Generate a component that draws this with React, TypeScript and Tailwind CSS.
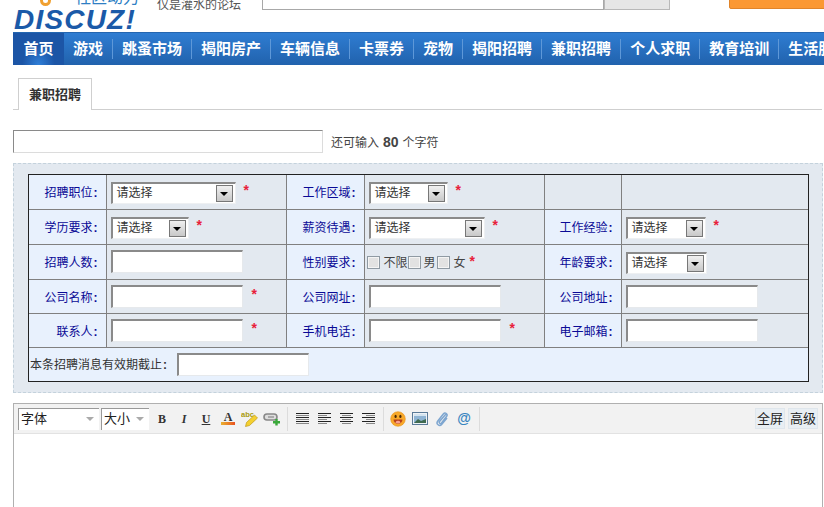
import React from 'react';

const navItems = ['游戏', '跳蚤市场', '揭阳房产', '车辆信息', '卡票券', '宠物', '揭阳招聘', '兼职招聘', '个人求职', '教育培训', '生活服务'];

const Star = ({ className = 'ml-2' }: { className?: string }) => (
  <span className={`${className} relative -top-[2px] text-[14px] font-bold leading-none text-[#e8203a]`}>*</span>
);

const Select = ({ width }: { width: string }) => (
  <div className={`${width} mt-[2px] flex h-[22px] items-center justify-between border-t-2 border-l-2 border-t-[#8a8a8a] border-l-[#8a8a8a] border-r border-b border-r-[#eef0f2] border-b-[#eef0f2] bg-white pr-[2px] pl-[4px] text-[12px] text-[#333]`}>
    <span>请选择</span>
    <span className="flex h-[17px] w-[17px] items-center justify-center border border-[#777] bg-gradient-to-b from-[#f0f0f0] to-[#c8c8c8]">
      <span className="mt-[1px] h-0 w-0 border-x-[4px] border-t-[4px] border-x-transparent border-t-black" />
    </span>
  </div>
);

const TextInput = () => (
  <div className="h-[23px] w-[132px] border-t-2 border-l-2 border-t-[#8a8a8a] border-l-[#8a8a8a] border-r border-b border-r-[#e6e9ec] border-b-[#e6e9ec] bg-white" />
);

const Check = () => (
  <span className="flex h-[13px] w-[13px] items-center justify-center border border-[#8f9aa3] bg-[#f4f4f4]">
    <span className="h-[9px] w-[9px] bg-[#e2e2e2]" />
  </span>
);

const Label = ({ children, plain }: { children?: React.ReactNode; plain?: boolean }) => (
  <td className={`${plain ? 'bg-[#e3e9f0]' : 'bg-[#e8f1fd]'} border-r border-b border-[#808080] pt-[3px] pr-[8px] text-right text-[12px] text-[#0a0a96]`}>
    {children}
    {children && <b className="ml-[1px]">:</b>}
  </td>
);

const Field = ({ children, last }: { children?: React.ReactNode; last?: boolean }) => (
  <td className={`${last ? '' : 'border-r'} border-b border-[#808080] bg-[#e3e9f0] pl-[4px]`}>
    <div className="flex items-center">{children}</div>
  </td>
);

const ToolSep = () => <span className="mr-[3px] ml-[4px] h-[24px] w-px bg-[#dcdcdc]" />;

const ToolBtn = ({ children }: { children: React.ReactNode }) => (
  <span className="flex h-[20px] w-[22px] items-center justify-center">{children}</span>
);

const AlignIcon = ({ rows }: { rows: [number, number][] }) => (
  <svg width="13" height="12" viewBox="0 0 13 12">
    {rows.map(([x, w], i) => (
      <rect key={i} x={x} y={i * 2} width={w} height="1" fill={i % 2 ? '#888' : '#222'} />
    ))}
  </svg>
);

export default function App() {
  return (
    <div className="h-[507px] w-[824px] overflow-hidden bg-white font-['Liberation_Sans','Noto_Sans_CJK_SC',sans-serif]">
      {/* header, top of it is cut off by the screenshot */}
      <div className="relative h-[32px] overflow-hidden pl-[14px]">
        <div className="flex h-[32px] items-start">
          <div className="relative h-[32px] w-[143px] shrink-0">
            <span className="absolute -top-[11px] left-[61px] text-[16px] leading-[18px] whitespace-nowrap text-[#2f7fc4]">社区动力</span>
            <span className="absolute -top-[5px] left-[26px] h-[11px] w-[11px] rounded-full border-[3px] border-[#f0a030]" />
            <span className="absolute top-[5px] left-0 text-[28px] leading-[30px] font-bold tracking-[1.2px] whitespace-nowrap text-[#1b5aa8] italic">DISCUZ!</span>
          </div>
          <span className="-mt-[2px] text-[12px] leading-[14px] whitespace-nowrap text-[#555]">仅是灌水的论坛</span>
          <div className="-mt-[14px] ml-[21px] h-[24px] w-[342px] shrink-0 border border-[#a8a8a8] bg-white" />
          <div className="-mt-[14px] h-[24px] w-[66px] shrink-0 border border-[#b8b8b8] bg-[#e6e6e6]" />
          <div className="-mt-[14px] ml-[59px] h-[23px] w-[100px] shrink-0 rounded-[2px] border border-[#e0842a] bg-[#fb9833]" />
        </div>
      </div>

      {/* nav */}
      <div className="ml-[13px] flex h-[33px] items-stretch overflow-hidden border-t border-[#2466b0] bg-gradient-to-b from-[#2f7dd2] to-[#2162ad] text-[15px] font-bold whitespace-nowrap text-white">
        <div className="flex w-[51px] shrink-0 items-center justify-center bg-[radial-gradient(ellipse_at_bottom,#2f7fd8_0%,#1c55a6_45%)]">首页</div>
        {navItems.map((item) => (
          <div key={item} className="flex shrink-0 items-center px-[9px]">
            <span>{item}</span>
            <span className="relative left-[9px] h-[20px] w-px bg-[#5e98d8]" />
          </div>
        ))}
      </div>

      <div className="w-[810px] pl-[13px]">
        {/* tab */}
        <div className="mt-[13px] flex h-[32px] w-[809px] border-b border-[#cfcfcf] pl-[5px]">
          <div className="h-[32px] w-[74px] border-x border-t border-[#cfcfcf] bg-white text-center text-[13px] leading-[32px] font-bold text-[#333]">兼职招聘</div>
        </div>

        {/* title */}
        <div className="mt-[20px] flex items-center text-[12px] text-[#444]">
          <div className="h-[23px] w-[310px] border-t border-l border-t-[#8a8a8a] border-l-[#8a8a8a] border-r border-b border-r-[#dcdcdc] border-b-[#dcdcdc] bg-white" />
          <span className="ml-[8px] pt-[2px]">还可输入</span>
          <span className="mx-[4px] pt-[2px] text-[14px] font-bold">80</span>
          <span className="pt-[2px]">个字符</span>
        </div>

        {/* form panel */}
        <div className="mt-[10px] h-[230px] w-[810px] border border-dashed border-[#c4d2dc] bg-[#e3e9f0] pt-[10px] pl-[14px]">
          <div className="w-[781px] border border-[#222]">
            <table className="w-[779px] table-fixed border-collapse">
              <colgroup>
                <col className="w-[77px]" />
                <col className="w-[180px]" />
                <col className="w-[78px]" />
                <col className="w-[180px]" />
                <col className="w-[77px]" />
                <col className="w-[187px]" />
              </colgroup>
              <tbody>
                <tr className="h-[34px]">
                  <Label>招聘职位</Label>
                  <Field><Select width="w-[125px]" /><Star /></Field>
                  <Label>工作区域</Label>
                  <Field><Select width="w-[79px]" /><Star /></Field>
                  <Label plain />
                  <Field last />
                </tr>
                <tr className="h-[35px]">
                  <Label>学历要求</Label>
                  <Field><Select width="w-[78px]" /><Star /></Field>
                  <Label>薪资待遇</Label>
                  <Field><Select width="w-[116px]" /><Star /></Field>
                  <Label>工作经验</Label>
                  <Field last><Select width="w-[80px]" /><Star /></Field>
                </tr>
                <tr className="h-[35px]">
                  <Label>招聘人数</Label>
                  <Field><TextInput /></Field>
                  <Label>性别要求</Label>
                  <td className="border-r border-b border-[#808080] bg-[#e3e9f0] pl-[2px]">
                    <div className="flex items-center pt-[2px] text-[12px] text-[#444]">
                      <Check /><span className="ml-[4px]">不限</span>
                      <Check /><span className="ml-[3px]">男</span>
                      <span className="ml-[1px]"><Check /></span><span className="ml-[4px]">女</span>
                      <Star className="ml-[4px]" />
                    </div>
                  </td>
                  <Label>年龄要求</Label>
                  <Field last><Select width="w-[81px]" /></Field>
                </tr>
                <tr className="h-[34px]">
                  <Label>公司名称</Label>
                  <Field><TextInput /><Star className="ml-[9px]" /></Field>
                  <Label>公司网址</Label>
                  <Field><TextInput /></Field>
                  <Label>公司地址</Label>
                  <Field last><TextInput /></Field>
                </tr>
                <tr className="h-[34px]">
                  <Label>联系人</Label>
                  <Field><TextInput /><Star className="ml-[9px]" /></Field>
                  <Label>手机电话</Label>
                  <Field><TextInput /><Star className="ml-[9px]" /></Field>
                  <Label>电子邮箱</Label>
                  <Field last><TextInput /></Field>
                </tr>
                <tr className="h-[34px]">
                  <td colSpan={6} className="bg-[#e8f1fd] pl-[1px]">
                    <div className="flex items-center text-[12px] text-[#333]">
                      <span className="pt-[2px]">本条招聘消息有效期截止<b className="ml-[1px]">:</b></span>
                      <span className="ml-[10px]"><TextInput /></span>
                    </div>
                  </td>
                </tr>
              </tbody>
            </table>
          </div>
        </div>

        {/* editor */}
        <div className="mt-[10px] h-[120px] w-[810px] border-t border-l border-r border-[#b0b0b0]">
          <div className="flex h-[30px] items-center border-b border-[#e2e2e2] bg-[#f2f2f2] pl-[4px]">
            <div className="flex h-[22px] w-[81px] items-center justify-between border-t border-l border-t-[#999] border-l-[#999] bg-white pr-[5px] pl-[2px] text-[13px] text-[#222]">
              <span>字体</span>
              <span className="h-0 w-0 border-x-[4px] border-t-[4px] border-x-transparent border-t-[#aaa]" />
            </div>
            <div className="ml-[2px] flex h-[22px] w-[48px] items-center justify-between border-t border-l border-t-[#999] border-l-[#999] bg-white pr-[5px] pl-[2px] text-[13px] text-[#222]">
              <span>大小</span>
              <span className="h-0 w-0 border-x-[4px] border-t-[4px] border-x-transparent border-t-[#aaa]" />
            </div>
            <div className="ml-[2px] flex items-center font-['Liberation_Serif',serif] text-[12px] font-bold text-[#333]">
              <ToolBtn>B</ToolBtn>
              <ToolBtn><i>I</i></ToolBtn>
              <ToolBtn><u>U</u></ToolBtn>
              <ToolBtn>
                <span className="flex flex-col items-center leading-[10px]">A<span className="h-[3px] w-[14px] bg-gradient-to-r from-[#e8b030] to-[#e85020]" /></span>
              </ToolBtn>
              <ToolBtn>
                <svg width="18" height="18" viewBox="0 0 18 18">
                  <text x="0" y="6.500" fontSize="7.500" fontWeight="bold" fill="#a89a10" fontFamily="Liberation Sans">abc</text>
                  <path d="M13.500 5l3 3-8 7.500-4 1 1-4z" fill="#f4d030" stroke="#c09a18" strokeWidth=".7" />
                </svg>
              </ToolBtn>
              <ToolBtn>
                <svg width="18" height="14" viewBox="0 0 18 14">
                  <rect x="1" y="2" width="13" height="6" rx="3" fill="#ddd" stroke="#888" strokeWidth="1.600" />
                  <path d="M5 5h6" stroke="#999" strokeWidth="1.500" />
                  <path d="M13.500 7v6.500M10 10.300h7" stroke="#3aa83a" strokeWidth="2.400" />
                </svg>
              </ToolBtn>
            </div>
            <ToolSep />
            <div className="flex items-center">
              <ToolBtn><AlignIcon rows={[[0, 13], [0, 13], [0, 13], [0, 13], [0, 13], [0, 13]]} /></ToolBtn>
              <ToolBtn><AlignIcon rows={[[0, 13], [0, 9], [0, 13], [0, 9], [0, 13], [0, 9]]} /></ToolBtn>
              <ToolBtn><AlignIcon rows={[[0, 13], [2, 9], [0, 13], [2, 9], [0, 13], [2, 9]]} /></ToolBtn>
              <ToolBtn><AlignIcon rows={[[0, 13], [4, 9], [0, 13], [4, 9], [0, 13], [4, 9]]} /></ToolBtn>
            </div>
            <ToolSep />
            <div className="flex items-center">
              <ToolBtn>
                <svg width="16" height="16" viewBox="0 0 16 16">
                  <circle cx="8" cy="8" r="7.300" fill="#f8a92a" stroke="#e89018" strokeWidth=".6" />
                  <ellipse cx="5.600" cy="5.400" rx="1.100" ry="1.700" fill="#4a2a08" />
                  <ellipse cx="10.400" cy="5.400" rx="1.100" ry="1.700" fill="#4a2a08" />
                  <path d="M3.500 8.500h9c0 2.500-2 4.300-4.500 4.300S3.500 11 3.500 8.500z" fill="#b8401a" />
                  <ellipse cx="8" cy="11.200" rx="2.200" ry="1.400" fill="#f8a090" />
                </svg>
              </ToolBtn>
              <ToolBtn>
                <svg width="16" height="13" viewBox="0 0 16 13">
                  <rect x=".5" y=".5" width="15" height="12" fill="#eef2f6" stroke="#5a7a98" />
                  <rect x="2" y="2" width="12" height="9" fill="#8fb4d4" />
                  <path d="M2 11l4-4 3 2 5-2v4z" fill="#3f6a50" />
                  <rect x="2" y="2" width="12" height="2" fill="#d4e4f0" />
                </svg>
              </ToolBtn>
              <ToolBtn>
                <svg width="14" height="16" viewBox="0 0 14 16">
                  <path d="M11 3L4.500 10.500c-1 1.300.8 2.800 2 1.500l5-6.500c1.800-2.300-1.300-4.800-3.200-2.500L2.800 10c-2.300 3 1.700 6 4 3.200L12 7" fill="none" stroke="#7ea6d0" strokeWidth="1.500" />
                </svg>
              </ToolBtn>
              <ToolBtn><span className="font-['Liberation_Sans',sans-serif] text-[14px] font-bold text-[#3a85c0]">@</span></ToolBtn>
            </div>
            <ToolSep />
            <div className="mr-[4px] ml-auto flex gap-[3px] text-[13px] text-[#222]">
              <span className="flex h-[21px] w-[30px] items-center justify-center border border-[#dfe6ec] bg-[#e8eef3]">全屏</span>
              <span className="flex h-[21px] w-[30px] items-center justify-center border border-[#dfe6ec] bg-[#e8eef3]">高级</span>
            </div>
          </div>
        </div>
      </div>
    </div>
  );
}
